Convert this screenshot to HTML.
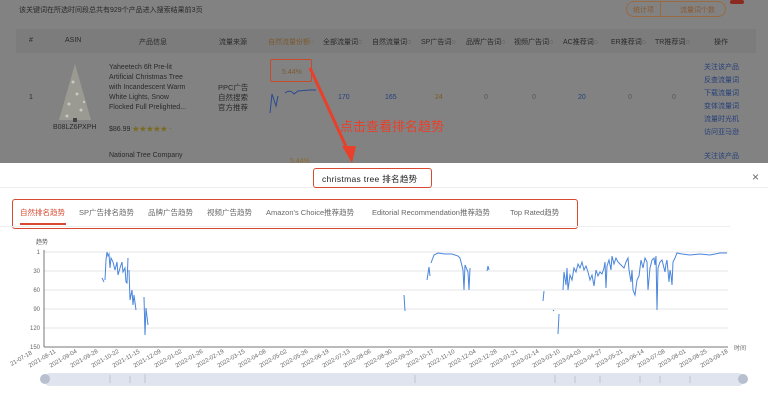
<!DOCTYPE html>
<html><head><meta charset="utf-8"><style>
*{margin:0;padding:0;box-sizing:border-box}
body{width:768px;height:400px;overflow:hidden;position:relative;background:#fff;font-family:"Liberation Sans","Noto Sans CJK SC",sans-serif;}
.top{position:absolute;left:0;top:0;width:768px;height:163px;background:#828282;color:#2a2a2a;font-size:7px;}
.a{position:absolute;white-space:nowrap}
.hdr{position:absolute;left:16px;top:29px;width:740px;height:24px;background:#7c7c7c}
.link{color:#26407a}
.modal{position:absolute;left:0;top:163px;width:768px;height:237px;background:#fff}
</style></head><body>
<div class="top">
<div class="a" style="left:19px;top:5px;font-size:7px;color:#2a2a2a">该关键词在所选时间段总共有929个产品进入搜索结果前3页</div>
<div class="a" style="left:626px;top:1px;width:100px;height:16px;border:1px solid #9a6a40;border-radius:8px"></div>
<div class="a" style="left:660px;top:1px;width:1px;height:16px;background:#9a6a40"></div>
<div class="a" style="left:633px;top:5px;color:#8a5a30">统计项</div>
<div class="a" style="left:680px;top:5px;color:#8a5a30">流量词个数</div>
<div class="a" style="left:730px;top:0;width:14px;height:4px;background:#8a2a20;border-radius:2px"></div>
<div class="hdr"></div>
<div class="a" style="left:29px;top:37px">#</div>
<div class="a" style="left:65px;top:37px">ASIN</div>
<div class="a" style="left:139px;top:37px">产品信息</div>
<div class="a" style="left:219px;top:37px">流量来源</div>
<div class="a" style="left:268px;top:37px;color:#7a5a30">自然流量份额◌</div>
<div class="a" style="left:323px;top:37px">全部流量词◌</div>
<div class="a" style="left:372px;top:37px">自然流量词◌</div>
<div class="a" style="left:421px;top:37px">SP广告词◌</div>
<div class="a" style="left:466px;top:37px">品牌广告词◌</div>
<div class="a" style="left:514px;top:37px">视频广告词◌</div>
<div class="a" style="left:563px;top:37px">AC推荐词◌</div>
<div class="a" style="left:611px;top:37px">ER推荐词◌</div>
<div class="a" style="left:655px;top:37px">TR推荐词◌</div>
<div class="a" style="left:714px;top:37px">操作</div>
<div class="a" style="left:29px;top:94px">1</div>
<svg class="a" style="left:55px;top:62px" width="40" height="62"><polygon points="20,2 36,58 4,58" fill="#9a9a92"/><g fill="#c8c8c0"><circle cx="18" cy="20" r="1.5"/><circle cx="22" cy="32" r="1.5"/><circle cx="14" cy="42" r="1.5"/><circle cx="26" cy="48" r="1.5"/><circle cx="12" cy="54" r="1.5"/><circle cx="29" cy="40" r="1.2"/></g><rect x="18" y="56" width="4" height="4" fill="#444"/></svg>
<div class="a" style="left:53px;top:124px">B08LZ6PXPH</div>
<div class="a" style="left:109px;top:63px;line-height:10px">Yaheetech 6ft Pre-lit<br>Artificial Christmas Tree<br>with Incandescent Warm<br>White Lights, Snow<br>Flocked Full Prelighted...</div>
<div class="a" style="left:109px;top:124px">$86.99 <span style="color:#7a6a20">★★★★★ -</span></div>
<div class="a" style="left:109px;top:152px">National Tree Company</div>
<div class="a" style="left:218px;top:83px;line-height:10px;font-size:7.5px">PPC广告<br>自然搜索<br>官方推荐</div>
<div class="a" style="left:270px;top:59px;width:42px;height:23px;border:1.5px solid #c84a2a;border-radius:2px"></div>
<div class="a" style="left:282px;top:69px;color:#7a5a30">5.44%</div>
<svg class="a" style="left:268px;top:86px" width="50" height="30"><path d="M2,27 L4,8 L6,14 L8,20 L10,10 M17,7 Q22,3 26,8 L30,5 L42,4 L48,4" stroke="#2a4a90" fill="none" stroke-width="1"/></svg>
<div class="a link" style="left:338px;top:94px">170</div>
<div class="a link" style="left:385px;top:94px">165</div>
<div class="a" style="left:435px;top:94px;color:#7a5a20">24</div>
<div class="a" style="left:484px;top:94px;color:#555">0</div>
<div class="a" style="left:532px;top:94px;color:#555">0</div>
<div class="a link" style="left:578px;top:94px">20</div>
<div class="a" style="left:628px;top:94px;color:#555">0</div>
<div class="a" style="left:672px;top:94px;color:#555">0</div>
<div class="a link" style="left:704px;top:61px;line-height:13px">关注该产品<br>反查流量词<br>下载流量词<br>变体流量词<br>流量时光机<br>访问亚马逊</div>
<div class="a link" style="left:704px;top:151px">关注该产品</div>
<div class="a" style="left:340px;top:116px;color:#e8402a;font-size:13px">点击查看排名趋势</div>
<svg class="a" style="left:300px;top:66px" width="60" height="100"><path d="M10,2 L49,87" stroke="#e8402a" stroke-width="3"/><polygon points="42,80 56,80 52,97" fill="#e8402a"/></svg>
<div class="a" style="left:290px;top:158px;color:#8a6a30">5.44%</div>
</div>
<div class="modal">
<div class="a" style="left:0;top:24px;width:768px;height:1px;background:#eee"></div>
<div class="a" style="left:313px;top:5px;width:119px;height:20px;border:1.5px solid #d84a30;border-radius:3px"></div>
<div class="a" style="left:322px;top:10px;font-size:8.5px;color:#222;letter-spacing:.3px">christmas tree 排名趋势</div>
<div class="a" style="left:752px;top:7px;font-size:12px;color:#666">×</div>
<div class="a" style="left:12px;top:36px;width:566px;height:30px;border:1.5px solid #d84a30;border-radius:3px"></div>
<div class="a" style="left:0;top:63px;width:730px;height:1px;background:#eee"></div>
<div class="a" style="left:20px;top:44px;font-size:7.5px;color:#d84a30">自然排名趋势</div>
<div class="a" style="left:20px;top:60px;width:46px;height:1.5px;background:#d84a30"></div>
<div class="a" style="left:79px;top:44px;font-size:7.5px;color:#666">SP广告排名趋势</div>
<div class="a" style="left:148px;top:44px;font-size:7.5px;color:#666">品牌广告趋势</div>
<div class="a" style="left:207px;top:44px;font-size:7.5px;color:#666">视频广告趋势</div>
<div class="a" style="left:266px;top:44px;font-size:7.5px;color:#666">Amazon's Choice推荐趋势</div>
<div class="a" style="left:372px;top:44px;font-size:7.5px;color:#666">Editorial Recommendation推荐趋势</div>
<div class="a" style="left:510px;top:44px;font-size:7.5px;color:#666">Top Rated趋势</div>
</div>
<svg class="a" style="left:0;top:0" width="768" height="400" font-family="Liberation Sans,Noto Sans CJK SC,sans-serif">
<text x="36" y="244" font-size="6" fill="#555">趋势</text>
<g stroke="#e4e4e4" stroke-width="1"><line x1="44" y1="252" x2="728" y2="252"/><line x1="44" y1="271" x2="728" y2="271"/><line x1="44" y1="290" x2="728" y2="290"/><line x1="44" y1="309" x2="728" y2="309"/><line x1="44" y1="328" x2="728" y2="328"/></g>
<line x1="44" y1="347" x2="728" y2="347" stroke="#777"/>
<line x1="44" y1="250" x2="44" y2="347" stroke="#777"/>
<g font-size="6" fill="#666" text-anchor="end"><text x="40" y="254">1</text><text x="40" y="273">30</text><text x="40" y="292">60</text><text x="40" y="311">90</text><text x="40" y="330">120</text><text x="40" y="349">150</text></g>
<text x="734" y="350" font-size="6" fill="#666">时间</text>
<g fill="none" stroke="#4a85dc" stroke-width="1">
<path d="M105,280 L106,260 L107,252 L108,256 L109,254 L110,268 L111,258 L113,262 L115,270 L117,262 L118,275 L120,268 L122,262 L123,272 L125,268 L126,282 L127,283 L128,258"/>
<path d="M129,270 L130,300 L132,290 L133,305 L134,295 L136,310"/>
<path d="M144,297 L145,335 L146,308 L148,325"/>
<path d="M102,278 L104,282"/>
<path d="M404,295 L405,311"/>
<path d="M427,280 L429,267 L430,276"/>
<path d="M431,263 L434,255 L438,253 L445,254 L452,254 L458,256 L460,258 L463,270 L464,290 L465,265 L468,272 L469,290 L470,268"/>
<path d="M487,271 L488,266 L489,270"/>
<path d="M543,301 L544,291"/>
<path d="M558,334 L559,314 M553,310 L554,311"/>
<path d="M563,290 L564,272 L566,285 L567,268 L568,290 L570,275 L572,280 L574,268 L576,272 L578,264 L580,268 L582,262 L584,270 L586,266 L588,272 L590,280 L592,275 L594,286 L596,270 L598,276 L600,272 L602,274 L604,268 L605,262 L606,288 L607,266 L609,260 L611,270 L612,256 L614,264 L616,258 L618,262 L620,264 L622,266 L624,268 L626,262 L628,258 L629,270 L631,282 L632,270 L633,290 L635,295 L637,280 L639,276 L641,260 L643,268 L645,258 L647,262 L648,290 L650,268 L652,260 L654,258 L655,265 L656,256 L657,310 L658,268 L660,262 L662,260 L664,268 L665,272 L666,264 L667,260 L669,282 L670,270 L671,275 L672,285 L673,262 L675,258 L677,253 L682,254 L690,255 L700,254 L710,255 L720,253 L727,253"/>
</g>
<g font-size="6" fill="#666">
<text transform="translate(22,360) rotate(-30)" text-anchor="middle">21-07-18</text>
<text transform="translate(43,360) rotate(-30)" text-anchor="middle">2021-08-11</text>
<text transform="translate(64,360) rotate(-30)" text-anchor="middle">2021-09-04</text>
<text transform="translate(85,360) rotate(-30)" text-anchor="middle">2021-09-28</text>
<text transform="translate(106,360) rotate(-30)" text-anchor="middle">2021-10-22</text>
<text transform="translate(127,360) rotate(-30)" text-anchor="middle">2021-11-15</text>
<text transform="translate(148,360) rotate(-30)" text-anchor="middle">2021-12-09</text>
<text transform="translate(169,360) rotate(-30)" text-anchor="middle">2022-01-02</text>
<text transform="translate(190,360) rotate(-30)" text-anchor="middle">2022-01-26</text>
<text transform="translate(211,360) rotate(-30)" text-anchor="middle">2022-02-19</text>
<text transform="translate(232,360) rotate(-30)" text-anchor="middle">2022-03-15</text>
<text transform="translate(253,360) rotate(-30)" text-anchor="middle">2022-04-08</text>
<text transform="translate(274,360) rotate(-30)" text-anchor="middle">2022-05-02</text>
<text transform="translate(295,360) rotate(-30)" text-anchor="middle">2022-05-26</text>
<text transform="translate(316,360) rotate(-30)" text-anchor="middle">2022-06-19</text>
<text transform="translate(337,360) rotate(-30)" text-anchor="middle">2022-07-13</text>
<text transform="translate(358,360) rotate(-30)" text-anchor="middle">2022-08-06</text>
<text transform="translate(379,360) rotate(-30)" text-anchor="middle">2022-08-30</text>
<text transform="translate(400,360) rotate(-30)" text-anchor="middle">2022-09-23</text>
<text transform="translate(421,360) rotate(-30)" text-anchor="middle">2022-10-17</text>
<text transform="translate(442,360) rotate(-30)" text-anchor="middle">2022-11-10</text>
<text transform="translate(463,360) rotate(-30)" text-anchor="middle">2022-12-04</text>
<text transform="translate(484,360) rotate(-30)" text-anchor="middle">2022-12-28</text>
<text transform="translate(505,360) rotate(-30)" text-anchor="middle">2023-01-21</text>
<text transform="translate(526,360) rotate(-30)" text-anchor="middle">2023-02-14</text>
<text transform="translate(547,360) rotate(-30)" text-anchor="middle">2023-03-10</text>
<text transform="translate(568,360) rotate(-30)" text-anchor="middle">2023-04-03</text>
<text transform="translate(589,360) rotate(-30)" text-anchor="middle">2023-04-27</text>
<text transform="translate(610,360) rotate(-30)" text-anchor="middle">2023-05-21</text>
<text transform="translate(631,360) rotate(-30)" text-anchor="middle">2023-06-14</text>
<text transform="translate(652,360) rotate(-30)" text-anchor="middle">2023-07-08</text>
<text transform="translate(673,360) rotate(-30)" text-anchor="middle">2023-08-01</text>
<text transform="translate(694,360) rotate(-30)" text-anchor="middle">2023-08-25</text>
<text transform="translate(715,360) rotate(-30)" text-anchor="middle">2023-09-18</text>
</g>
<rect x="44" y="373" width="700" height="13" rx="6" fill="#dfe4ee"/>
<circle cx="45" cy="379" r="5" fill="#b8c0d0"/><circle cx="743" cy="379" r="5" fill="#b8c0d0"/>
<g stroke="#b0b8c8" stroke-width="0.7"><path d="M110,375 L110,383 M130,376 L130,383 M145,374 L145,383 M415,375 L415,383 M555,375 L555,383 M575,376 L575,383 M600,376 L600,383 M640,376 L640,383 M660,376 L660,383 M690,376 L690,383"/></g>
</svg>
</body></html>
